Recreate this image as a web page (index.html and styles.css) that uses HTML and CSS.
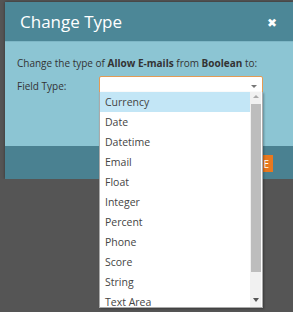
FILE: index.html
```html
<!DOCTYPE html>
<html lang="en">
<head>
  <meta charset="UTF-8">
  <title>Change Type</title>
  <link rel="stylesheet" href="styles.css">
</head>
<body>
  <div class="dialog">
    <div class="header">
      <h1>Change Type</h1>
      <span class="close">&#10006;</span>
    </div>
    <div class="content">
      <p class="intro">Change the type of <b>Allow E-mails</b> from <b>Boolean</b> to:</p>
      <div class="field">
        <label>Field Type:</label>
        <div class="select"><span class="arrow"></span></div>
      </div>
    </div>
    <div class="footer">
      <button class="btn">CHANGE</button>
    </div>
  </div>

  <div class="dropdown">
    <ul class="options">
      <li class="active">Currency</li>
      <li>Date</li>
      <li>Datetime</li>
      <li>Email</li>
      <li>Float</li>
      <li>Integer</li>
      <li>Percent</li>
      <li>Phone</li>
      <li>Score</li>
      <li>String</li>
      <li>Text Area</li>
    </ul>
    <div class="scrollbar">
      <span class="up"></span>
      <span class="thumb"></span>
      <span class="down"></span>
    </div>
  </div>
</body>
</html>
```

FILE: styles.css
```css
body {
  background-color: #555;
  margin: 0;
  overflow: hidden;
  font-family: 'Open Sans', sans-serif;
  color: #333;
}
.dialog {
  margin: 2px 0 0 5px;
  width: 288px;
  box-shadow: 0 0 3px rgba(0, 0, 0, 0.4);
}
.header {
  background-color: #4c8797;
  height: 39px;
  display: flex;
  align-items: center;
  justify-content: space-between;
  padding: 0 16px 0 15px;
}
h1 {
  margin: 0;
  color: #fff;
  font-weight: normal;
  font-size: 17px;
}
.close {
  color: #fff;
  font-size: 12px;
  font-family: 'DejaVu Sans', sans-serif;
  font-weight: bold;
  margin-top: 2px;
}
.content {
  background-color: #8cc5d3;
  height: 105px;
  padding: 0 12px;
  box-sizing: border-box;
  border-top: 1px solid #7eb7c6;
}
.intro {
  margin: 0;
  padding-top: 14px;
  font-size: 10px;
  line-height: 14px;
}
.intro b {
  font-weight: bold;
}
.field {
  display: flex;
  align-items: center;
  margin-top: 6px;
  font-size: 10px;
}
label {
  width: 82px;
}
.select {
  position: relative;
  width: 162px;
  height: 17px;
  background-color: #fff;
  border: 1px solid #e39b55;
  border-radius: 2px;
}
.arrow {
  position: absolute;
  right: 5px;
  top: 8px;
  border-left: 3px solid transparent;
  border-right: 3px solid transparent;
  border-top: 3px solid #777;
}
.footer {
  background-color: #4a8191;
  height: 33px;
  display: flex;
  align-items: center;
  justify-content: flex-end;
  padding-right: 20px;
}
.btn {
  background-color: #e8781e;
  color: #fff;
  border: none;
  height: 17px;
  font-size: 10px;
  padding: 0 4px 0 6px;
  margin-top: 2px;
  font-family: 'Open Sans', sans-serif;
}
.dropdown {
  position: absolute;
  left: 99px;
  top: 92px;
  width: 162px;
  height: 215px;
  background-color: #fff;
  border: 1px solid #aaa;
  border-top: none;
  display: flex;
  overflow: hidden;
  box-shadow: 1px 1px 2px rgba(0, 0, 0, 0.3);
}
.options {
  list-style: none;
  margin: 0;
  padding: 0;
  flex: 1;
  font-size: 10.5px;
  color: #444;
}
.options li {
  height: 20px;
  line-height: 20px;
  padding-left: 5px;
}
.options li.active {
  background-color: #c3e6f6;
}
.scrollbar {
  width: 11px;
  background-color: #f1f1f1;
  display: flex;
  flex-direction: column;
  align-items: center;
  margin-right: 1px;
}
.up,
.down {
  width: 0;
  height: 0;
  border-left: 3px solid transparent;
  border-right: 3px solid transparent;
}
.up {
  border-bottom: 3px solid #aaa;
  margin-top: 3px;
  margin-bottom: 6px;
}
.thumb {
  width: 10px;
  height: 168px;
  background-color: #bdbdbd;
}
.down {
  margin-top: 26px;
  border-top: 4px solid #555;
}
```
